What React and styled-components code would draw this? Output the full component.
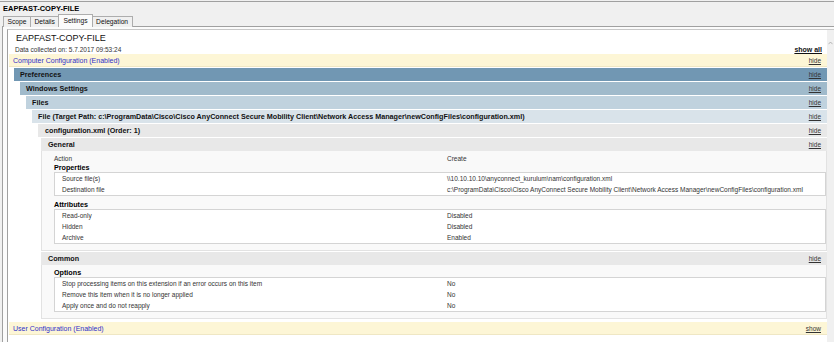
import React from "react";
import styled, { createGlobalStyle } from "styled-components";

const GlobalStyle = createGlobalStyle`
  html, body { margin: 0; padding: 0; }
  body {
    width: 834px;
    height: 342px;
    overflow: hidden;
    background: #f0f0f0;
    font-family: "Liberation Sans", Arial, sans-serif;
    color: #222;
  }
`;

const Window = styled.div`
  width: 834px;
  height: 342px;
  display: flex;
  flex-direction: column;
`;

const TitleBar = styled.div`
  margin-top: 1px;
  border-top: 1px solid #a0a0a0;
  height: 13px;
  line-height: 13px;
  padding-left: 3px;
  font-size: 7.5px;
  font-weight: bold;
  color: #000;
`;

const TabStrip = styled.div`
  display: flex;
  align-items: flex-end;
  height: 12px;
  padding-left: 4px;
  position: relative;
  z-index: 1;
  margin-bottom: -1px;
`;

const Tab = styled.div`
  height: ${(p) => (p.$active ? 12 : 10)}px;
  line-height: ${(p) => (p.$active ? 11 : 10)}px;
  padding: 0 ${(p) => (p.$active ? 4 : 3.5)}px;
  margin-left: -1px;
  font-size: 6.7px;
  color: #111;
  border: 1px solid #adadad;
  border-bottom: none;
  background: ${(p) => (p.$active ? "#fbfbfb" : "#f0f0f0")};
  position: relative;
  z-index: ${(p) => (p.$active ? 2 : 1)};
`;

const TabPanel = styled.div`
  flex: 1;
  min-height: 0;
  display: flex;
  margin-left: 2px;
  border-top: 1px solid #a0a0a0;
  border-left: 1px solid #a0a0a0;
  background: #fbfbfb;
  padding: 2px 0 0 4px;
`;

const Report = styled.div`
  flex: 1;
  display: flex;
  background: #fff;
  border-top: 1px solid #c8c8c8;
  border-left: 1px solid #a0a0a0;
`;

const ReportBody = styled.div`
  flex: 1;
  padding-left: 1px;
`;

const Scrollbar = styled.div`
  width: 7px;
  background: #f0f0f0;
  display: flex;
  justify-content: center;
  padding-top: 11px;
  box-sizing: border-box;
`;

const ReportTitle = styled.div`
  padding: 3px 0 0 7px;
  height: 11px;
  line-height: 11px;
  font-size: 9px;
  color: #111;
`;

const DataRow = styled.div`
  display: flex;
  justify-content: space-between;
  align-items: center;
  height: 10px;
  padding: 0 5px 0 6px;
  font-size: 6.5px;
  color: #333;
`;

const ShowAll = styled.span`
  font-size: 7px;
  font-weight: bold;
  color: #111;
  text-decoration: underline;
`;

const Bar = styled.div`
  height: 13px;
  margin-bottom: ${(p) => (p.$flush ? 0 : 1)}px;
  display: flex;
  align-items: center;
  justify-content: space-between;
  padding-left: ${(p) => p.$pad}px;
  padding-right: 6px;
  background: ${(p) => p.$tone};
  box-sizing: border-box;
  border-bottom: ${(p) => (p.$cream ? "1px solid #efe7c4" : "none")};
`;

const BarTitle = styled.span`
  font-size: ${(p) => (p.$cream ? 7 : 7.2)}px;
  font-weight: ${(p) => (p.$cream ? "normal" : "bold")};
  color: ${(p) => (p.$cream ? "#2f2fc8" : "#111")};
  white-space: nowrap;
`;

const BarLink = styled.span`
  font-size: 6.5px;
  color: #333;
  text-decoration: underline;
`;

const Nest = styled.div`
  margin-left: ${(p) => p.$indent}px;
`;

const Body = styled.div`
  background: #f9f9f9;
  border-left: 1px solid #e2e2e2;
  border-right: 1px solid #e2e2e2;
  border-bottom: 1px solid #e2e2e2;
  margin-bottom: 1px;
  padding: ${(p) => p.$top}px 0 6px 12px;
`;

const GroupTitle = styled.div`
  height: 8px;
  line-height: 8px;
  margin-top: ${(p) => p.$gap || 0}px;
  font-size: 7.2px;
  font-weight: bold;
  color: #000;
`;

const InfoBox = styled.div`
  background: #fff;
  border: 1px solid #d4d4d4;
`;

const Row = styled.div`
  display: grid;
  grid-template-columns: ${(p) => (p.$boxed ? "385px" : "393px")} 1fr;
  padding-left: ${(p) => (p.$boxed ? 7 : 0)}px;
  height: 11px;
  line-height: 11px;
  font-size: 6.5px;
  color: #333;
  white-space: nowrap;
`;

const Spacer = styled.div`
  height: ${(p) => p.$h}px;
`;

function Section({ title, tone, pad, cream, flush, link = "hide" }) {
  return (
    <Bar $tone={tone} $pad={pad} $cream={cream} $flush={flush}>
      <BarTitle $cream={cream}>{title}</BarTitle>
      <BarLink>{link}</BarLink>
    </Bar>
  );
}

function InfoTable({ rows }) {
  return (
    <InfoBox>
      {rows.map(([k, v]) => (
        <Row $boxed key={k}>
          <span>{k}</span>
          <span>{v}</span>
        </Row>
      ))}
    </InfoBox>
  );
}

const tabs = ["Scope", "Details", "Settings", "Delegation"];
const path =
  "c:\\ProgramData\\Cisco\\Cisco AnyConnect Secure Mobility Client\\Network Access Manager\\newConfigFiles\\configuration.xml";

export default function App() {
  return (
    <Window>
      <GlobalStyle />
      <TitleBar>EAPFAST-COPY-FILE</TitleBar>
      <TabStrip>
        {tabs.map((t) => (
          <Tab key={t} $active={t === "Settings"}>
            {t}
          </Tab>
        ))}
      </TabStrip>
      <TabPanel>
        <Report>
          <ReportBody>
            <ReportTitle>EAPFAST-COPY-FILE</ReportTitle>
            <DataRow>
              <span>Data collected on: 5.7.2017 09:53:24</span>
              <ShowAll>show all</ShowAll>
            </DataRow>
            <Section title="Computer Configuration (Enabled)" tone="#fdf6d6" pad={4} cream />
            <Nest $indent={5}>
              <Section title="Preferences" tone="#7197b3" pad={6} />
              <Nest $indent={6}>
                <Section title="Windows Settings" tone="#a0bacb" pad={6} />
                <Nest $indent={6}>
                  <Section title="Files" tone="#c0d2de" pad={6} />
                  <Nest $indent={6}>
                    <Section title={`File (Target Path: ${path})`} tone="#d9e3ea" pad={6} />
                    <Nest $indent={6}>
                      <Section title="configuration.xml (Order: 1)" tone="#e8e8e8" pad={7} />
                      <Nest $indent={3}>
                        <Section title="General" tone="#e8e8e8" pad={7} flush />
                        <Body $top={2}>
                          <Row>
                            <span>Action</span>
                            <span>Create</span>
                          </Row>
                          <GroupTitle>Properties</GroupTitle>
                          <InfoTable
                            rows={[
                              ["Source file(s)", "\\\\10.10.10.10\\anyconnect_kurulum\\nam\\configuration.xml"],
                              ["Destination file", path],
                            ]}
                          />
                          <GroupTitle $gap={5}>Attributes</GroupTitle>
                          <InfoTable
                            rows={[
                              ["Read-only", "Disabled"],
                              ["Hidden", "Disabled"],
                              ["Archive", "Enabled"],
                            ]}
                          />
                        </Body>
                        <Section title="Common" tone="#e8e8e8" pad={7} flush />
                        <Body $top={4}>
                          <GroupTitle>Options</GroupTitle>
                          <InfoTable
                            rows={[
                              ["Stop processing items on this extension if an error occurs on this item", "No"],
                              ["Remove this item when it is no longer applied", "No"],
                              ["Apply once and do not reapply", "No"],
                            ]}
                          />
                        </Body>
                      </Nest>
                    </Nest>
                  </Nest>
                </Nest>
              </Nest>
            </Nest>
            <Spacer $h={2} />
            <Section title="User Configuration (Enabled)" tone="#fdf6d6" pad={4} cream link="show" />
          </ReportBody>
          <Scrollbar>
            <svg width="5" height="4" viewBox="0 0 5 4">
              <path d="M0.5 3.2 L2.5 1 L4.5 3.2" fill="none" stroke="#a8a8a8" strokeWidth="0.8" />
            </svg>
          </Scrollbar>
        </Report>
      </TabPanel>
    </Window>
  );
}
